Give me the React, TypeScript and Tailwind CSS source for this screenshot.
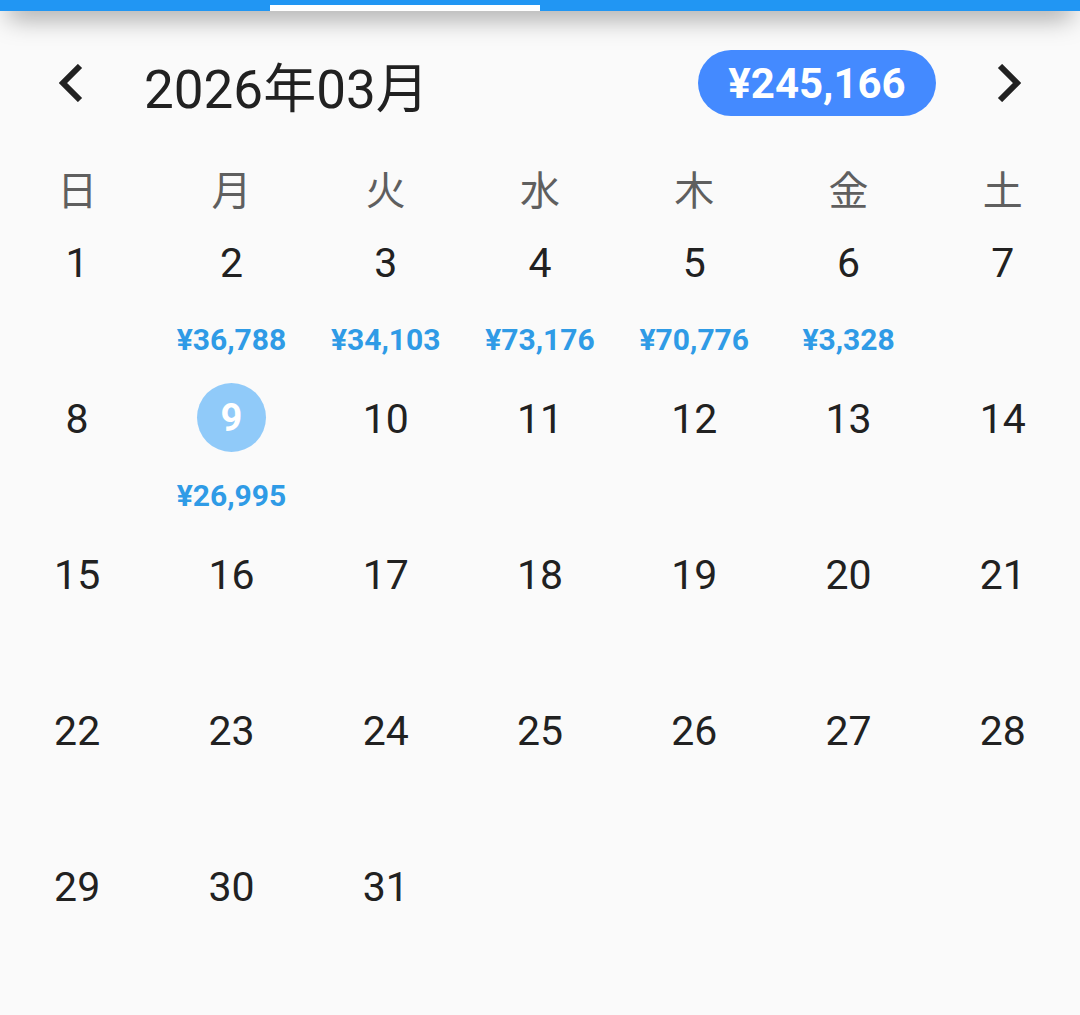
const WEEK = ['日', '月', '火', '水', '木', '金', '土'];

const AMOUNTS: Record<number, string> = {
  2: '¥36,788',
  3: '¥34,103',
  4: '¥73,176',
  5: '¥70,776',
  6: '¥3,328',
  9: '¥26,995',
};

const DAYS = Array.from({ length: 31 }, (_, i) => i + 1);

function Chevron({ flip }: { flip?: boolean }) {
  return (
    <svg viewBox="0 0 24 38" className="w-[24px] h-[38px] shrink-0 text-[#212121]">
      <path
        d={flip ? 'M3 2 L20 19 L3 36' : 'M21 2 L4 19 L21 36'}
        fill="none"
        stroke="currentColor"
        strokeWidth="6"
      />
    </svg>
  );
}

function DayCell({ day }: { day: number }) {
  const isToday = day === 9;
  return (
    <div className="h-[156px] flex flex-col items-center">
      <div
        className={`w-[69px] h-[69px] rounded-full flex items-center justify-center leading-none ${
          isToday ? 'bg-[#90caf9] text-white font-bold text-[38px]' : 'text-[#212121] text-[41px] pt-[4px]'
        }`}
      >
        {day}
      </div>
      {AMOUNTS[day] && (
        <div className="mt-[28px] text-[30px] leading-[32px] font-bold text-[#2f9be6]">{AMOUNTS[day]}</div>
      )}
    </div>
  );
}

export default function App() {
  return (
    <div
      className="w-[1080px] h-[1015px] overflow-hidden bg-[#fafafa]"
      style={{ fontFamily: 'Roboto, "Noto Sans CJK JP", sans-serif' }}
    >
      {/* Tab bar */}
      <div className="h-[40px] -mt-[29px] bg-[#2196f3] grid grid-cols-4 items-end shadow-[0_15px_26px_-8px_rgba(0,0,0,0.36)]">
        <div />
        <div className="h-[6px] bg-white" />
        <div />
        <div />
      </div>

      {/* Month header */}
      <div className="flex items-center h-[66px] mt-[39px] pl-[59px] pr-[59px]">
        <Chevron />
        <div className="ml-[61px] text-[53px] leading-none text-[#212121] mt-[15px]">2026年03月</div>
        <div className="ml-auto w-[238px] h-[66px] rounded-[33px] bg-[#448aff] flex items-center justify-center text-white text-[42px] font-bold">
          ¥245,166
        </div>
        <div className="ml-[61px]">
          <Chevron flip />
        </div>
      </div>

      {/* Weekday labels */}
      <div className="grid grid-cols-7 mt-[47px] h-[58px]">
        {WEEK.map((w) => (
          <div key={w} className="text-center text-[40px] leading-[58px] text-[#5f5f5f]">
            {w}
          </div>
        ))}
      </div>

      {/* Days */}
      <div className="grid grid-cols-7 mt-[6px]">
        {DAYS.map((d) => (
          <DayCell key={d} day={d} />
        ))}
      </div>
    </div>
  );
}
